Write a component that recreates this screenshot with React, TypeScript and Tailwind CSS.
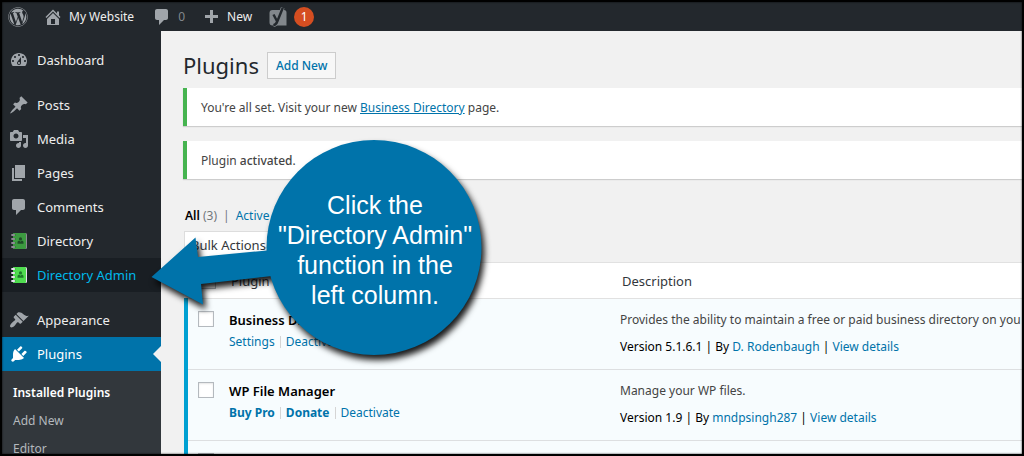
import type { ReactNode } from 'react';
import { FaWordpress } from 'react-icons/fa';

const icons = {
  home: 'M16 8.5l1.53 1.53-1.06 1.06L10 4.6l-6.47 6.49-1.06-1.06L10 2.5l4 4v-2h2v4zm-6-2.46l6 5.99V18H4v-5.97zM12 17v-5H8v5h4z',
  comments: 'M5 2h9c1.1 0 2 .9 2 2v7c0 1.1-.9 2-2 2h-2l-5 5v-5H5c-1.1 0-2-.9-2-2V4c0-1.1.9-2 2-2z',
  plus: 'M17 8v3h-5v5H9v-5H4V8h5V3h3v5h5z',
  dashboard:
    'M3.76 16h12.48c1.1-1.37 1.76-3.11 1.76-5 0-4.42-3.58-8-8-8s-8 3.58-8 8c0 1.89.66 3.63 1.76 5zM10 4c.55 0 1 .45 1 1s-.45 1-1 1-1-.45-1-1 .45-1 1-1zM6 6c.55 0 1 .45 1 1s-.45 1-1 1-1-.45-1-1 .45-1 1-1zm8 0c.55 0 1 .45 1 1s-.45 1-1 1-1-.45-1-1 .45-1 1-1zm-5.37 5.55L12 7v6c0 1.1-.9 2-2 2s-2-.9-2-2c0-.57.24-1.08.63-1.45zM4 10c.55 0 1 .45 1 1s-.45 1-1 1-1-.45-1-1 .45-1 1-1zm12 0c.55 0 1 .45 1 1s-.45 1-1 1-1-.45-1-1 .45-1 1-1zm-5 3c0-.55-.45-1-1-1s-1 .45-1 1 .45 1 1 1 1-.45 1-1z',
  posts:
    'M10.44 3.02l1.82-1.82 6.36 6.35-1.83 1.82c-1.05-.68-2.48-.57-3.41.36l-.75.75c-.92.93-1.04 2.35-.35 3.41l-1.83 1.82-2.41-2.41-2.8 2.79c-.42.42-3.38 2.71-3.8 2.29s1.86-3.39 2.28-3.81l2.79-2.79L4.1 9.36l1.83-1.82c1.05.69 2.48.57 3.4-.36l.75-.75c.93-.92 1.05-2.35.36-3.41z',
  media:
    'M13 11V4c0-.55-.45-1-1-1h-1.67L9 1H5L3.67 3H2c-.55 0-1 .45-1 1v7c0 .55.45 1 1 1h10c.55 0 1-.45 1-1zM7 4.5c1.38 0 2.5 1.12 2.5 2.5S8.38 9.5 7 9.5 4.5 8.38 4.5 7 5.62 4.5 7 4.5zM14 6h5v10.5c0 1.38-1.12 2.5-2.5 2.5S14 17.88 14 16.5s1.12-2.5 2.5-2.5c.17 0 .34.02.5.05V9h-3V6zm-4 8.05V13h2v3.5c0 1.38-1.12 2.5-2.5 2.5S7 17.88 7 16.5 8.12 14 9.5 14c.17 0 .34.02.5.05z',
  pages: 'M6 15V2h10v13H6zm-1 1h8v2H3V5h2v11z',
  appearance:
    'M14.48 11.06L7.41 3.99l1.5-1.5c.5-.56 2.3-.47 3.51.32 1.21.8 1.43 1.28 2.91 2.1 1.18.64 2.45 1.26 4.45.85zm-.71.71L6.7 4.7 4.93 6.47c-.39.39-.39 1.02 0 1.41l1.06 1.06c.39.39.39 1.03 0 1.42-.6.6-1.43 1.11-2.21 1.69-.35.26-.7.53-1.01.84C1.43 14.23.4 16.08 1.4 17.07c.99 1 2.84-.03 4.18-1.36.31-.31.58-.66.85-1.02.57-.78 1.08-1.61 1.69-2.21.39-.39 1.02-.39 1.41 0l1.06 1.06c.39.39 1.02.39 1.41 0z',
  plugins:
    'M13.11 4.36L9.87 7.6 8 5.73l3.24-3.24c.35-.34 1.05-.2 1.56.32.52.51.66 1.21.31 1.55zm-8 1.77l.91-1.12 9.01 9.01-1.19.84c-.71.71-2.63 1.16-3.82 1.16H6.14L4.9 17.26c-.59.59-1.54.59-2.12 0-.59-.58-.59-1.53 0-2.12l1.24-1.24v-3.88c0-1.13.4-3.19 1.09-3.89zm7.26 3.97l3.24-3.24c.34-.35 1.04-.21 1.55.31.52.51.66 1.21.31 1.55l-3.24 3.25z',
};

type IconName = keyof typeof icons;

function Icon({ name }: { name: IconName }) {
  return (
    <svg viewBox="0 0 20 20" className="size-5 shrink-0" fill="currentColor" aria-hidden="true">
      <path d={icons[name]} />
    </svg>
  );
}

function AddressBook({ active }: { active?: boolean }) {
  const cover = active ? '#4fdc4f' : '#3c9a40';
  const ink = active ? '#1d7a2a' : '#1f4d27';
  const ring = active ? '#e8e0ee' : '#8f8a96';
  return (
    <svg viewBox="0 0 20 20" className="size-5 shrink-0" aria-hidden="true">
      <rect x="4" y="2" width="14" height="16" rx="1.5" fill={ring} />
      <rect x="4" y="2" width="13" height="16" rx="1" fill={cover} />
      <circle cx="11.5" cy="7.9" r="1.6" fill={ink} />
      <path d="M8.5 12.8v-1.400c0-1.200 1-1.600 2-1.600l1 1 1-1c1 0 2 .4 2 1.600v1.400z" fill={ink} />
      {[4, 8, 12, 16].map((y) => (
        <g key={y}>
          <circle cx="5.8" cy={y} r="0.7" fill={ink} />
          <path d={`M3 ${y}h2.200`} stroke={ring} strokeWidth="1.8" strokeLinecap="round" />
        </g>
      ))}
    </svg>
  );
}

function YoastIcon() {
  const letter = 'M5.500 7.500l3.400 6.500M14.800.8L9.400 14.300c-.9 2.400-1.900 3.700-4 4';
  return (
    <svg viewBox="0 0 20 20" className="size-5 shrink-0" aria-hidden="true">
      <path d="M4.500 3H16a2.500 2.500 0 0 1 2.500 2.500v13h-14a3 3 0 0 1-3-3V6a3 3 0 0 1 3-3z" fill="#82878c" />
      <path d={letter} fill="none" stroke="#82878c" strokeWidth="3.800" />
      <path d={letter} fill="none" stroke="#23282d" strokeWidth="2.400" />
    </svg>
  );
}

interface MenuItemProps {
  label: string;
  icon: ReactNode;
  state?: 'hover' | 'current';
}

const menuStyles = {
  normal: 'text-[#eeeeee]',
  hover: 'bg-[#191e23] text-[#00b9eb]',
  current: 'bg-[#0073aa] text-white',
};

function MenuItem({ label, icon, state }: MenuItemProps) {
  return (
    <li className="relative">
      <a href="#" className={`flex h-[34px] items-center gap-2 pl-[7px] text-[13px] ${menuStyles[state ?? 'normal']}`}>
        <span className={state === 'current' ? 'text-white' : 'text-[#a0a5aa]'}>{icon}</span>
        <span className="pt-0.5">{label}</span>
      </a>
      {state === 'current' && (
        <span className="absolute top-[9px] right-0 border-y-8 border-r-8 border-y-transparent border-r-[#f1f1f1]" />
      )}
    </li>
  );
}

function AdminBar() {
  return (
    <header className="flex h-[29px] shrink-0 items-center bg-[#23282d] pl-1.5 text-[#eeeeee]">
      <a href="#" aria-label="About WordPress" className="mr-[15px] text-[#a0a5aa]">
        <FaWordpress className="size-5" />
      </a>
      <a href="#" className="mr-[18px] flex items-center gap-1.5">
        <span className="text-[#a0a5aa]"><Icon name="home" /></span>
        My Website
      </a>
      <a href="#" className="mr-4 flex items-center gap-1.5 text-[#82878c]">
        <span className="text-[#a0a5aa]"><Icon name="comments" /></span>
        0
      </a>
      <a href="#" className="mr-4 flex items-center gap-1.5">
        <span className="text-[#a0a5aa]"><Icon name="plus" /></span>
        New
      </a>
      <a href="#" aria-label="SEO" className="flex items-center gap-1.5">
        <YoastIcon />
        <span className="flex size-5 items-center justify-center rounded-full bg-[#d54e21] text-white">1</span>
      </a>
    </header>
  );
}

function Sidebar() {
  return (
    <nav className="w-[159px] shrink-0 bg-[#23282d] pt-3">
      <ul className="mb-[11px]">
        <MenuItem label="Dashboard" icon={<Icon name="dashboard" />} />
      </ul>
      <ul className="mb-[11px]">
        <MenuItem label="Posts" icon={<Icon name="posts" />} />
        <MenuItem label="Media" icon={<Icon name="media" />} />
        <MenuItem label="Pages" icon={<Icon name="pages" />} />
        <MenuItem label="Comments" icon={<Icon name="comments" />} />
        <MenuItem label="Directory" icon={<AddressBook />} />
        <MenuItem label="Directory Admin" icon={<AddressBook active />} state="hover" />
      </ul>
      <ul>
        <MenuItem label="Appearance" icon={<Icon name="appearance" />} />
        <MenuItem label="Plugins" icon={<Icon name="plugins" />} state="current" />
      </ul>
      <ul className="bg-[#32373c] py-2 pl-[11px] leading-7 text-[#b4b9be]">
        <li><a href="#" className="font-semibold text-white">Installed Plugins</a></li>
        <li><a href="#">Add New</a></li>
        <li><a href="#">Editor</a></li>
      </ul>
    </nav>
  );
}

function Notice({ children }: { children: ReactNode }) {
  return (
    <div className="mb-[15px] h-[38px] border-l-4 border-[#46b450] bg-white pt-0.5 pl-3.5 leading-9 shadow-[0_1px_1px_rgba(0,0,0,0.15)]">
      {children}
    </div>
  );
}

function CheckBox({ label }: { label: string }) {
  return (
    <input
      type="checkbox"
      aria-label={label}
      className="block size-4 appearance-none border border-[#b4b9be] bg-white shadow-[inset_0_1px_2px_rgba(0,0,0,0.1)]"
    />
  );
}

interface Action {
  label: string;
  bold?: boolean;
}

interface Plugin {
  name: string;
  actions: Action[];
  description: string;
  version: string;
  author: string;
}

const plugins: Plugin[] = [
  {
    name: 'Business Directory',
    actions: [{ label: 'Settings' }, { label: 'Deactivate' }],
    description: 'Provides the ability to maintain a free or paid business directory on you',
    version: '5.1.6.1',
    author: 'D. Rodenbaugh',
  },
  {
    name: 'WP File Manager',
    actions: [{ label: 'Buy Pro', bold: true }, { label: 'Donate', bold: true }, { label: 'Deactivate' }],
    description: 'Manage your WP files.',
    version: '1.9',
    author: 'mndpsingh287',
  },
];

function PluginRow({ plugin }: { plugin: Plugin }) {
  return (
    <tr className="h-[71px] border-b border-[#dddfe1] bg-[#f7fcfe] align-top">
      <td className="border-l-4 border-[#00a0d2] pt-3 pl-2.5">
        <CheckBox label={`Select ${plugin.name}`} />
      </td>
      <td className="pt-[11px] pl-2.5 leading-5">
        <div className="text-[13px] font-semibold text-black">{plugin.name}</div>
        <div className="mt-0.5 flex items-center">
          {plugin.actions.map((action, i) => (
            <span key={action.label} className="flex items-center">
              {i > 0 && <span className="mx-[5px] h-3 w-px bg-[#d5d5d5]" />}
              <a href="#" className={`text-[#0073aa] ${action.bold ? 'font-bold' : ''}`}>{action.label}</a>
            </span>
          ))}
        </div>
      </td>
      <td className="overflow-hidden pt-[11px] pl-2.5 leading-5 whitespace-nowrap">
        <p>{plugin.description}</p>
        <p className="mt-[7px] text-black">
          Version {plugin.version} | By <a href="#" className="text-[#0073aa]">{plugin.author}</a> |{' '}
          <a href="#" className="text-[#0073aa]">View details</a>
        </p>
      </td>
    </tr>
  );
}

function Callout() {
  return (
    <div className="pointer-events-none absolute top-[138px] left-[148px] h-[216px] w-[332px]">
      <svg
        viewBox="150 140 332 216"
        className="absolute inset-0 size-full overflow-visible drop-shadow-[3px_5px_3px_rgba(0,0,0,0.9)]"
        fill="#0073aa"
        aria-hidden="true"
      >
        <circle cx="374" cy="247.500" r="107.500" />
        <path d="M151.500 277L195.500 237.500L198 257L272 250V276L201 284L203 304.500Z" />
      </svg>
      <p className="relative ml-[118px] pt-[50px] text-center font-['Liberation_Sans',Arial,sans-serif] text-[25px] leading-[30px] text-white">
        Click the
        <br />
        "Directory Admin"
        <br />
        function in the
        <br />
        left column.
      </p>
    </div>
  );
}

export default function App() {
  return (
    <div className="relative flex h-screen flex-col overflow-hidden border-2 border-black bg-[#f1f1f1] font-['Noto_Sans',sans-serif] text-xs text-[#444444]">
      <AdminBar />
      <div className="flex min-h-0 flex-1">
        <Sidebar />
        <main className="min-w-0 flex-1 overflow-hidden pt-[21px] pl-[22px]">
          <div className="mb-[9px] flex h-[27px] items-center gap-2">
            <h1 className="text-[22px] leading-[27px] text-[#23282d]">Plugins</h1>
            <button className="h-[27px] border border-[#cccccc] bg-[#f7f7f7] px-2 pt-px text-xs font-medium text-[#0073aa]">
              Add New
            </button>
          </div>
          <Notice>
            You're all set. Visit your new <a href="#" className="text-[#0073aa] underline">Business Directory</a> page.
          </Notice>
          <Notice>
            Plugin <span className="font-medium">activated</span>.
          </Notice>
          <div className="ml-px">
            <div className="mt-[27px] mb-[5px] flex h-5 items-center gap-1.5 pl-px">
              <a href="#" className="font-semibold text-black">
                All <span className="font-normal text-[#72777c]">(3)</span>
              </a>
              <span className="text-[#72777c]">|</span>
              <a href="#" className="text-[#0073aa]">Active</a>
            </div>
            <select
              aria-label="Bulk actions"
              className="mb-[3px] block h-7 w-32 appearance-none border border-[#dddddd] bg-white pt-0.5 pl-1.5 text-[13px] text-[#32373c]"
            >
              <option>Bulk Actions</option>
            </select>
            <table className="w-full table-fixed border-collapse border-t border-[#e1e1e1] bg-white text-left">
              <colgroup>
                <col className="w-[33px]" />
                <col className="w-[391px]" />
                <col />
              </colgroup>
              <thead>
                <tr className="h-9 border-b border-[#e1e1e1] text-[13px] text-[#32373c]">
                  <th className="pl-3.5"><CheckBox label="Select all" /></th>
                  <th className="pt-0.5 pl-3 font-normal">Plugin</th>
                  <th className="pt-0.5 pl-3 font-normal">Description</th>
                </tr>
              </thead>
              <tbody>
                {plugins.map((plugin) => (
                  <PluginRow key={plugin.name} plugin={plugin} />
                ))}
                <tr className="h-[71px] bg-[#f7fcfe] align-top">
                  <td className="border-l-4 border-[#00a0d2] pt-3 pl-2.5"><CheckBox label="Select plugin" /></td>
                  <td />
                  <td />
                </tr>
              </tbody>
            </table>
          </div>
        </main>
      </div>
      <Callout />
      <div className="pointer-events-none absolute inset-0 shadow-[inset_0_0_2px_rgba(0,0,0,0.9)]" />
    </div>
  );
}
